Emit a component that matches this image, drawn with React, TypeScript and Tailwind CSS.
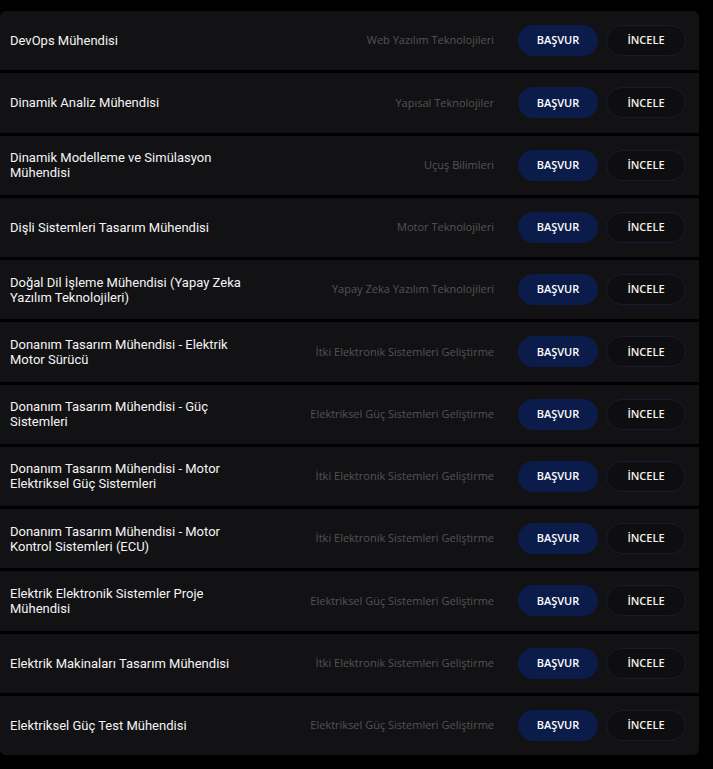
import React from 'react';

const JOBS = [
  { title: 'DevOps Mühendisi', dept: 'Web Yazılım Teknolojileri' },
  { title: 'Dinamik Analiz Mühendisi', dept: 'Yapısal Teknolojiler' },
  { title: 'Dinamik Modelleme ve Simülasyon Mühendisi', dept: 'Uçuş Bilimleri' },
  { title: 'Dişli Sistemleri Tasarım Mühendisi', dept: 'Motor Teknolojileri' },
  { title: 'Doğal Dil İşleme Mühendisi (Yapay Zeka Yazılım Teknolojileri)', dept: 'Yapay Zeka Yazılım Teknolojileri' },
  { title: 'Donanım Tasarım Mühendisi - Elektrik Motor Sürücü', dept: 'İtki Elektronik Sistemleri Geliştirme' },
  { title: 'Donanım Tasarım Mühendisi - Güç Sistemleri', dept: 'Elektriksel Güç Sistemleri Geliştirme' },
  { title: 'Donanım Tasarım Mühendisi - Motor Elektriksel Güç Sistemleri', dept: 'İtki Elektronik Sistemleri Geliştirme' },
  { title: 'Donanım Tasarım Mühendisi - Motor Kontrol Sistemleri (ECU)', dept: 'İtki Elektronik Sistemleri Geliştirme' },
  { title: 'Elektrik Elektronik Sistemler Proje Mühendisi', dept: 'Elektriksel Güç Sistemleri Geliştirme' },
  { title: 'Elektrik Makinaları Tasarım Mühendisi', dept: 'İtki Elektronik Sistemleri Geliştirme' },
  { title: 'Elektriksel Güç Test Mühendisi', dept: 'Elektriksel Güç Sistemleri Geliştirme' },
];

export default function App() {
  return (
    <div className="min-h-[769px] w-full bg-black pt-[11px]">
      {/* job list */}
      <div className="w-[699px] flex flex-col gap-[3px] rounded-[6px] overflow-hidden">
        {JOBS.map((job, i) => (
          <div key={i} className="h-[59.25px] bg-[#121214] flex items-center pl-[10px] pr-[13px]">
            <div className="w-[245px] text-[13px] leading-[15px] font-normal text-[#f4f4f4] font-['Roboto',sans-serif]">
              {job.title}
            </div>
            <div className="flex-1 text-right text-[11px] text-[#525254] font-['Open_Sans',sans-serif] pr-[24px]">
              {job.dept}
            </div>
            <div className="flex gap-[8px] font-['Open_Sans',sans-serif]">
              <button className="w-[80px] h-[31px] rounded-full bg-[#0c1c4a] text-white text-[11px] font-semibold">
                BAŞVUR
              </button>
              <button className="w-[80px] h-[31px] rounded-full border border-[#141d33] bg-[#0e0e11] text-[#f5f2e8] text-[11px] font-semibold">
                İNCELE
              </button>
            </div>
          </div>
        ))}
      </div>
    </div>
  );
}
